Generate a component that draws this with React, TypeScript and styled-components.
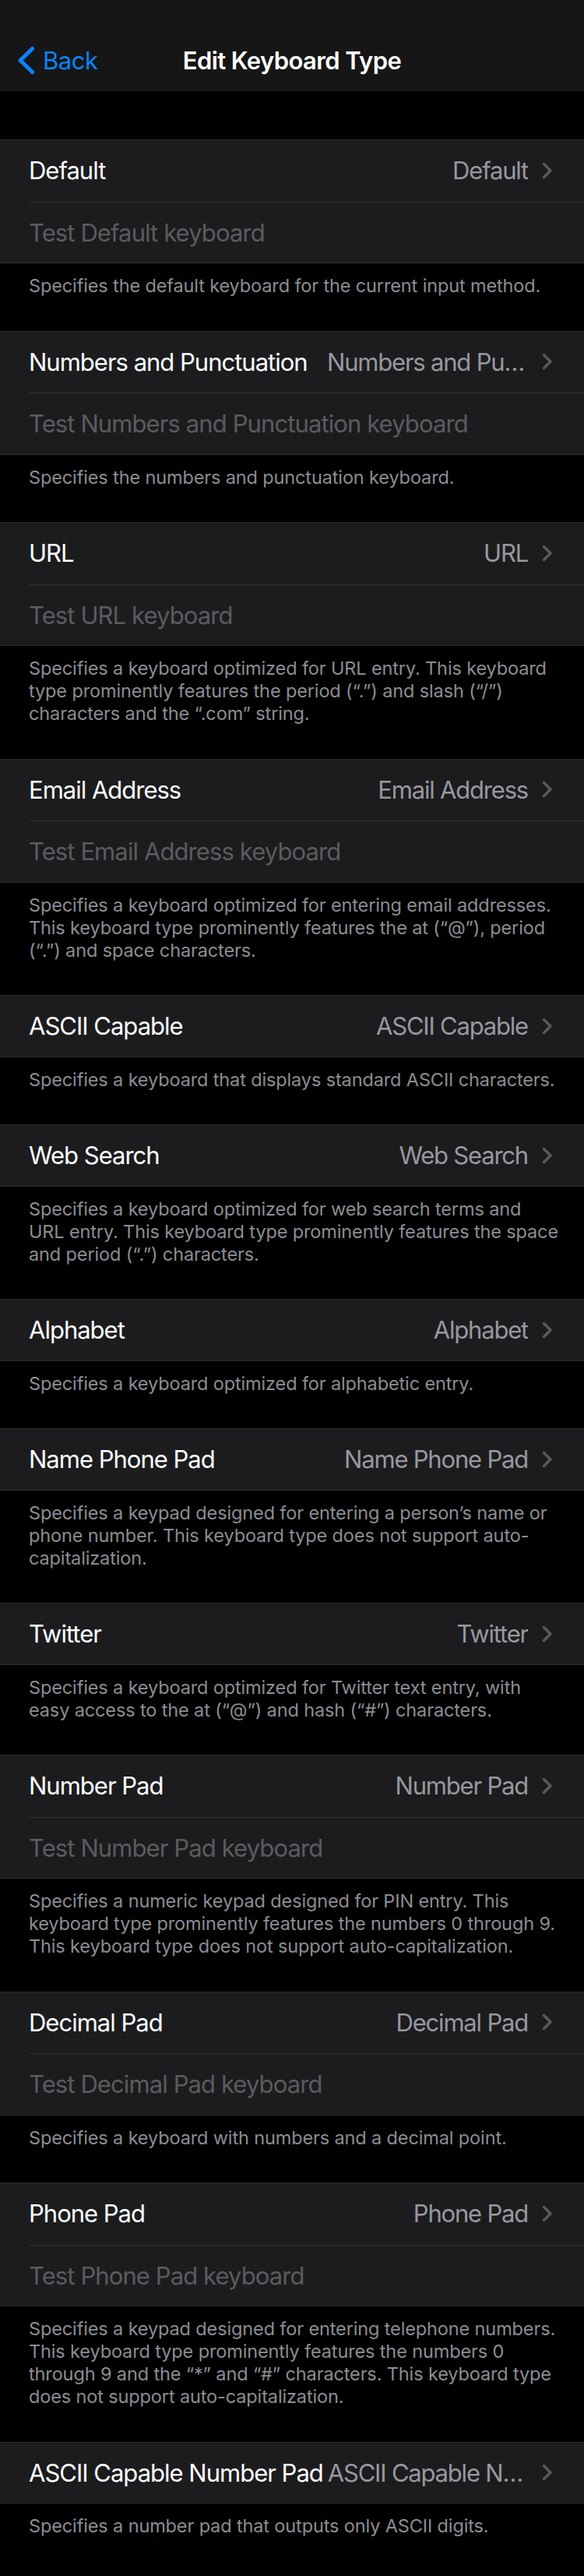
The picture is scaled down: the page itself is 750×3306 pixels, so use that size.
import React from "react";
import styled, { createGlobalStyle } from "styled-components";

const GlobalStyle = createGlobalStyle`
  html, body {
    margin: 0;
    padding: 0;
    background: #000000;
  }
  body {
    font-family: Inter, "Noto Sans", "Liberation Sans", sans-serif;
    -webkit-font-smoothing: antialiased;
  }
  * { box-sizing: border-box; }
`;

const Page = styled.div`
  width: 750px;
  min-height: 3306px;
  background: #000000;
  display: flex;
  flex-direction: column;
`;

const NavBar = styled.header`
  height: 117px;
  padding-top: 37px;
  background: #161616;
  display: flex;
  flex-direction: column;
`;

const NavInner = styled.div`
  position: relative;
  height: 80px;
  display: flex;
  align-items: center;
  justify-content: center;
`;

const BackButton = styled.button`
  position: absolute;
  left: 22px;
  top: 0;
  bottom: 0;
  display: flex;
  align-items: center;
  gap: 10px;
  padding: 0;
  border: 0;
  background: none;
  color: #0a84ff;
  font-family: inherit;
  font-size: 31px;
  letter-spacing: -0.5px;
  cursor: pointer;
`;

const Title = styled.h1`
  margin: 0;
  color: #ffffff;
  font-size: 31px;
  font-weight: 600;
  letter-spacing: -0.6px;
`;

const TopSpacer = styled.div`
  height: 62px;
`;

const Group = styled.section`
  background: #1c1c1e;
  border-top: 1px solid #2c2c2e;
  border-bottom: 1px solid #2c2c2e;
  display: flex;
  flex-direction: column;
`;

const Row = styled.div<{ $divider?: boolean }>`
  height: ${(p) => (p.$divider ? "79.5px" : "77.5px")};
  padding: 0 40px ${(p) => (p.$divider ? "2px" : "0")} 37px;
  display: flex;
  align-items: center;
  gap: 6px;
  position: relative;
  ${(p) =>
    p.$divider
      ? `&::after {
    content: "";
    position: absolute;
    left: 37px;
    right: 0;
    bottom: 0;
    height: 1px;
    background: #323234;
  }`
      : ""}
`;

const Label = styled.span`
  flex: 0 0 auto;
  color: #ffffff;
  font-size: 31px;
  letter-spacing: -1px;
  white-space: nowrap;
`;

const Value = styled.span`
  flex: 1 1 auto;
  min-width: 0;
  max-width: 258px;
  margin-left: auto;
  text-align: right;
  color: #98989f;
  font-size: 31px;
  letter-spacing: -1.2px;
  white-space: nowrap;
  overflow: hidden;
  text-overflow: ellipsis;
`;

const Chevron = styled.svg`
  flex: 0 0 auto;
  width: 14px;
  height: 22px;
  margin-left: 12px;
`;

const TestInput = styled.input`
  width: 100%;
  border: 0;
  outline: none;
  padding: 0;
  background: transparent;
  color: #ffffff;
  font-family: inherit;
  font-size: 31px;
  letter-spacing: -0.9px;
  &::placeholder {
    color: #5b5b5f;
  }
`;

const Footer = styled.p`
  margin: 0;
  padding: 14px 30px 43.5px 37px;
  color: #8d8d93;
  font-size: 23.5px;
  line-height: 29px;
  letter-spacing: -0.13px;
`;

const FooterLine = styled.span`
  display: block;
  white-space: nowrap;
`;

type Item = {
  label: string;
  test?: string;
  footer: string[];
};

const items: Item[] = [
  {
    label: "Default",
    test: "Test Default keyboard",
    footer: ["Specifies the default keyboard for the current input method."],
  },
  {
    label: "Numbers and Punctuation",
    test: "Test Numbers and Punctuation keyboard",
    footer: ["Specifies the numbers and punctuation keyboard."],
  },
  {
    label: "URL",
    test: "Test URL keyboard",
    footer: [
      "Specifies a keyboard optimized for URL entry. This keyboard",
      "type prominently features the period (“.”) and slash (“/”)",
      "characters and the “.com” string.",
    ],
  },
  {
    label: "Email Address",
    test: "Test Email Address keyboard",
    footer: [
      "Specifies a keyboard optimized for entering email addresses.",
      "This keyboard type prominently features the at (“@”), period",
      "(“.”) and space characters.",
    ],
  },
  {
    label: "ASCII Capable",
    footer: ["Specifies a keyboard that displays standard ASCII characters."],
  },
  {
    label: "Web Search",
    footer: [
      "Specifies a keyboard optimized for web search terms and",
      "URL entry. This keyboard type prominently features the space",
      "and period (“.”) characters.",
    ],
  },
  {
    label: "Alphabet",
    footer: ["Specifies a keyboard optimized for alphabetic entry."],
  },
  {
    label: "Name Phone Pad",
    footer: [
      "Specifies a keypad designed for entering a person’s name or",
      "phone number. This keyboard type does not support auto-",
      "capitalization.",
    ],
  },
  {
    label: "Twitter",
    footer: [
      "Specifies a keyboard optimized for Twitter text entry, with",
      "easy access to the at (“@”) and hash (“#”) characters.",
    ],
  },
  {
    label: "Number Pad",
    test: "Test Number Pad keyboard",
    footer: [
      "Specifies a numeric keypad designed for PIN entry. This",
      "keyboard type prominently features the numbers 0 through 9.",
      "This keyboard type does not support auto-capitalization.",
    ],
  },
  {
    label: "Decimal Pad",
    test: "Test Decimal Pad keyboard",
    footer: ["Specifies a keyboard with numbers and a decimal point."],
  },
  {
    label: "Phone Pad",
    test: "Test Phone Pad keyboard",
    footer: [
      "Specifies a keypad designed for entering telephone numbers.",
      "This keyboard type prominently features the numbers 0",
      "through 9 and the “*” and “#” characters. This keyboard type",
      "does not support auto-capitalization.",
    ],
  },
  {
    label: "ASCII Capable Number Pad",
    footer: ["Specifies a number pad that outputs only ASCII digits."],
  },
];

const ChevronRight = () => (
  <Chevron viewBox="0 0 14 22" fill="none">
    <path
      d="M2.5 2.5 L11 11 L2.5 19.5"
      stroke="#5a5a5e"
      strokeWidth="3.4"
      strokeLinecap="round"
      strokeLinejoin="round"
    />
  </Chevron>
);

const BackChevron = () => (
  <svg width="23" height="37" viewBox="0 0 23 37" fill="none">
    <path
      d="M19.5 3.5 L4 18.5 L19.5 33.5"
      stroke="#0a84ff"
      strokeWidth="5.2"
      strokeLinecap="round"
      strokeLinejoin="round"
    />
  </svg>
);

export default function App() {
  return (
    <>
      <GlobalStyle />
      <Page>
        <NavBar>
          <NavInner>
            <BackButton>
              <BackChevron />
              <span>Back</span>
            </BackButton>
            <Title>Edit Keyboard Type</Title>
          </NavInner>
        </NavBar>
        <TopSpacer />
        {items.map((item) => (
          <React.Fragment key={item.label}>
            <Group>
              <Row $divider={!!item.test}>
                <Label>{item.label}</Label>
                <Value>{item.label}</Value>
                <ChevronRight />
              </Row>
              {item.test && (
                <Row>
                  <TestInput placeholder={item.test} />
                </Row>
              )}
            </Group>
            <Footer>
              {item.footer.map((line) => (
                <FooterLine key={line}>{line}</FooterLine>
              ))}
            </Footer>
          </React.Fragment>
        ))}
      </Page>
    </>
  );
}
